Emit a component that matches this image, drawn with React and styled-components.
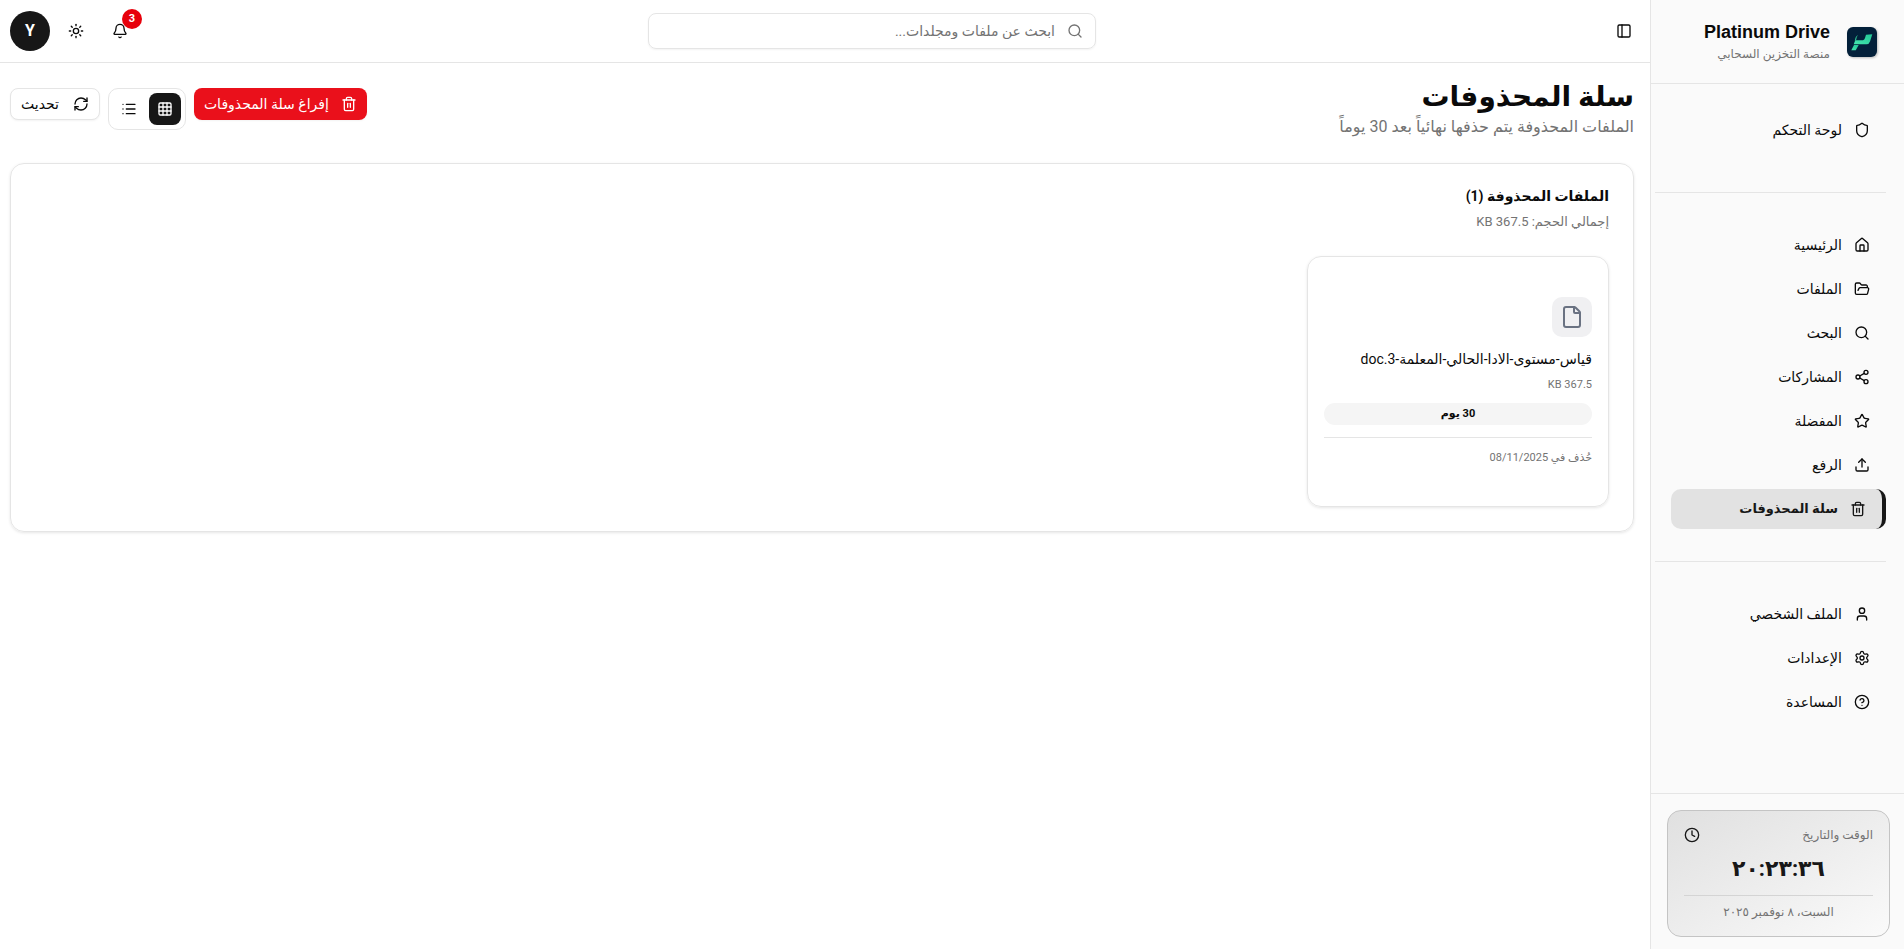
import React from "react";
import styled, { createGlobalStyle, css } from "styled-components";
import {
  Bell,
  CircleQuestionMark,
  Clock,
  File,
  FolderOpen,
  Grid3x3,
  House,
  List,
  PanelLeft,
  RefreshCw,
  Search,
  Settings,
  Share2,
  Shield,
  Star,
  Sun,
  Trash2,
  Upload,
  User,
} from "lucide-react";

const COLORS = {
  text: "#0a0a0a",
  primary: "#171717",
  muted: "#737373",
  border: "#e5e5e5",
  sidebar: "#fafafa",
  active: "#e2e2e2",
  badge: "#f5f5f5",
  red: "#e7000b",
  danger: "#ea101b",
  slate: "#6a7282",
};

const NAV_GROUPS = [
  [{ label: "لوحة التحكم", icon: Shield }],
  [
    { label: "الرئيسية", icon: House },
    { label: "الملفات", icon: FolderOpen },
    { label: "البحث", icon: Search },
    { label: "المشاركات", icon: Share2 },
    { label: "المفضلة", icon: Star },
    { label: "الرفع", icon: Upload },
    { label: "سلة المحذوفات", icon: Trash2, active: true },
  ],
  [
    { label: "الملف الشخصي", icon: User },
    { label: "الإعدادات", icon: Settings },
    { label: "المساعدة", icon: CircleQuestionMark },
  ],
];

const FILES = [
  {
    name: "قياس-مستوى-الادا-الحالي-المعلمة-3.doc",
    size: "367.5 KB",
    left: "30 يوم",
    deleted: "حُذف في 08/11/2025",
  },
];

const Logo = () => (
  <LogoSvg viewBox="0 0 32 32" aria-hidden="true">
    <defs>
      <linearGradient id="leaf" x1="0" y1="1" x2="1" y2="0">
        <stop offset="0" stopColor="#45e6ae" />
        <stop offset="1" stopColor="#22c796" />
      </linearGradient>
    </defs>
    <rect x="1" y="1" width="30" height="30" rx="6" fill="#03203a" />
    <path
      d="M20 8.700L26.300 8.300L24 15.500Q23 18.300 20.500 18.300H7.700L9.300 14.300H17Q18.500 14 19 12Z"
      fill="url(#leaf)"
    />
    <path d="M8 19H12.700L9.700 24.300H5.300Z" fill="url(#leaf)" />
    <path d="M8.800 15Q9 10.500 12 9Q10.300 11 10 14.500Z" fill="#2bb98d" />
  </LogoSvg>
);

const Sidebar = () => (
  <Aside>
    <Brand>
      <Logo />
      <div>
        <BrandName>Platinum Drive</BrandName>
        <BrandNote>منصة التخزين السحابي</BrandNote>
      </div>
    </Brand>
    <Nav>
      {NAV_GROUPS.map((items, i) => (
        <NavGroup key={i}>
          {items.map(({ label, icon: Icon, active }) => (
            <li key={label}>
              <NavLink href="#" $active={active}>
                <Icon size={16} />
                {label}
              </NavLink>
            </li>
          ))}
        </NavGroup>
      ))}
    </Nav>
    <AsideFooter>
      <ClockCard>
        <ClockHead>
          <span>الوقت والتاريخ</span>
          <Clock size={16} color={COLORS.primary} />
        </ClockHead>
        <Time>٢٠:٢٣:٣٦</Time>
        <Today>السبت، ٨ نوفمبر ٢٠٢٥</Today>
      </ClockCard>
    </AsideFooter>
  </Aside>
);

const TopBar = () => (
  <Header>
    <IconButton aria-label="القائمة الجانبية">
      <PanelLeft size={16} />
    </IconButton>
    <SearchBox>
      <Search size={16} />
      <SearchInput
        type="search"
        aria-label="بحث"
        placeholder="ابحث عن ملفات ومجلدات..."
      />
    </SearchBox>
    <HeaderActions>
      <IconButton aria-label="الإشعارات">
        <Bell size={16} />
        <Count>3</Count>
      </IconButton>
      <IconButton aria-label="المظهر">
        <Sun size={16} />
      </IconButton>
      <Avatar>Y</Avatar>
    </HeaderActions>
  </Header>
);

const FileCard = ({ file }) => (
  <Card>
    <FileIcon>
      <File size={24} />
    </FileIcon>
    <FileName>{file.name}</FileName>
    <FileSize>{file.size}</FileSize>
    <DaysLeft>{file.left}</DaysLeft>
    <Deleted>{file.deleted}</Deleted>
  </Card>
);

const App = () => (
  <Page dir="rtl" lang="ar">
    <GlobalStyle />
    <Sidebar />
    <Content>
      <TopBar />
      <Main>
        <TitleRow>
          <div>
            <Title>سلة المحذوفات</Title>
            <Subtitle>الملفات المحذوفة يتم حذفها نهائياً بعد 30 يوماً</Subtitle>
          </div>
          <Actions>
            <Button $danger>
              <Trash2 size={16} />
              إفراغ سلة المحذوفات
            </Button>
            <ViewSwitch>
              <ViewButton $on aria-label="شبكة">
                <Grid3x3 size={16} />
              </ViewButton>
              <ViewButton aria-label="قائمة">
                <List size={16} />
              </ViewButton>
            </ViewSwitch>
            <Button>
              <RefreshCw size={16} />
              تحديث
            </Button>
          </Actions>
        </TitleRow>
        <Panel>
          <PanelTitle>الملفات المحذوفة (1)</PanelTitle>
          <PanelNote>إجمالي الحجم: 367.5 KB</PanelNote>
          <FileGrid>
            {FILES.map((file) => (
              <FileCard key={file.name} file={file} />
            ))}
          </FileGrid>
        </Panel>
      </Main>
    </Content>
  </Page>
);

const GlobalStyle = createGlobalStyle`
  *, *::before, *::after {
    box-sizing: border-box;
  }
  body {
    margin: 0;
    background: #fff;
    color: ${COLORS.text};
    font-family: Roboto, "DejaVu Sans", sans-serif;
    font-size: 14px;
    line-height: 20px;
  }
  h1, h2, h3, p, ul {
    margin: 0;
    padding: 0;
  }
  ul {
    list-style: none;
  }
  button, input {
    font: inherit;
    color: inherit;
  }
  svg {
    flex-shrink: 0;
  }
`;

const Page = styled.div`
  display: flex;
  min-height: 100vh;
`;

const Aside = styled.aside`
  display: flex;
  flex-direction: column;
  flex: none;
  width: 254px;
  background: ${COLORS.sidebar};
  border-left: 1px solid ${COLORS.border};
`;

const Brand = styled.div`
  display: flex;
  align-items: center;
  gap: 16px;
  height: 84px;
  padding: 0 26px;
  border-bottom: 1px solid ${COLORS.border};
`;

const LogoSvg = styled.svg`
  width: 32px;
  height: 32px;
  filter: drop-shadow(1px 1px 1px rgba(0, 0, 0, 0.25));
`;

const BrandName = styled.p`
  font-family: "Liberation Sans", sans-serif;
  font-size: 18px;
  font-weight: 700;
  line-height: 24px;
`;

const BrandNote = styled.p`
  font-size: 12px;
  color: ${COLORS.muted};
`;

const Nav = styled.nav`
  flex: 1;
  padding: 0 18px 0 4px;
`;

const NavGroup = styled.ul`
  display: flex;
  flex-direction: column;
  gap: 4px;
  padding: 32px 0 32px 16px;

  & + & {
    border-top: 1px solid ${COLORS.border};
  }
  &:first-child {
    padding-top: 26px;
    padding-bottom: 42px;
  }
`;

const NavLink = styled.a`
  display: flex;
  align-items: center;
  gap: 12px;
  height: 40px;
  padding: 0 16px;
  border-radius: 10px;
  color: inherit;
  text-decoration: none;

  ${({ $active }) =>
    $active &&
    css`
      background: ${COLORS.active};
      border-right: 4px solid ${COLORS.primary};
      color: ${COLORS.primary};
      font-size: 13px;
      font-weight: 700;
    `}
`;

const AsideFooter = styled.div`
  padding: 16px 14px 12px 16px;
  border-top: 1px solid ${COLORS.border};
`;

const ClockCard = styled.div`
  padding: 16px;
  border: 1px solid #c4c4c4;
  border-radius: 14px;
  background: linear-gradient(to bottom right, #e0e0e0, #fafafa);
`;

const ClockHead = styled.div`
  display: flex;
  align-items: center;
  justify-content: space-between;
  height: 16px;
  font-size: 12px;
  color: ${COLORS.muted};
`;

const Time = styled.p`
  margin: 8px 0;
  font-size: 22px;
  font-weight: 700;
  line-height: 36px;
  text-align: center;
  color: ${COLORS.primary};
`;

const Today = styled.p`
  padding-top: 8px;
  border-top: 1px solid #d4d4d4;
  font-size: 12px;
  line-height: 16px;
  text-align: center;
  color: ${COLORS.muted};
`;

const Content = styled.div`
  flex: 1;
  min-width: 0;
`;

const Header = styled.header`
  display: flex;
  align-items: center;
  justify-content: space-between;
  height: 63px;
  padding: 0 8px 0 10px;
  border-bottom: 1px solid ${COLORS.border};
`;

const IconButton = styled.button`
  position: relative; // anchors the count badge
  display: grid;
  place-items: center;
  width: 36px;
  height: 36px;
  padding: 0;
  border: none;
  background: none;
`;

const Count = styled.span`
  position: absolute;
  top: -4px;
  right: -4px;
  display: grid;
  place-items: center;
  width: 20px;
  height: 20px;
  border-radius: 50%;
  background: ${COLORS.red};
  color: #fff;
  font-size: 11px;
  font-weight: 700;
`;

const SearchBox = styled.div`
  display: flex;
  align-items: center;
  gap: 12px;
  width: 448px;
  height: 36px;
  padding: 0 12px;
  border: 1px solid ${COLORS.border};
  border-radius: 8px;
  box-shadow: 0 1px 2px rgba(0, 0, 0, 0.05);
  color: ${COLORS.muted};
`;

const SearchInput = styled.input`
  flex: 1;
  min-width: 0;
  padding: 0;
  border: none;
  outline: none;
  background: none;

  &::placeholder {
    color: ${COLORS.muted};
    opacity: 1;
  }
`;

const HeaderActions = styled.div`
  display: flex;
  align-items: center;
  gap: 8px;
`;

const Avatar = styled.button`
  width: 40px;
  height: 40px;
  padding: 0;
  border: none;
  border-radius: 50%;
  background: ${COLORS.primary};
  color: #fff;
  font-size: 16px;
  font-weight: 700;
`;

const Main = styled.main`
  padding: 16px 16px 16px 10px;
`;

const TitleRow = styled.div`
  display: flex;
  justify-content: space-between;
  align-items: flex-start;
  margin-bottom: 24px;
`;

const Title = styled.h1`
  font-size: 28px;
  font-weight: 700;
  line-height: 36px;
`;

const Subtitle = styled.p`
  font-size: 16px;
  line-height: 24px;
  color: ${COLORS.muted};
`;

const Actions = styled.div`
  display: flex;
  align-items: flex-start;
  gap: 8px;
  padding-top: 9px;
`;

const Button = styled.button`
  display: flex;
  align-items: center;
  gap: ${({ $danger }) => ($danger ? "12px" : "14px")};
  height: 32px;
  padding: 0 10px;
  border: ${({ $danger }) => ($danger ? "none" : `1px solid ${COLORS.border}`)};
  border-radius: 8px;
  background: ${({ $danger }) => ($danger ? COLORS.danger : "#fff")};
  color: ${({ $danger }) => ($danger ? "#fff" : COLORS.text)};
  box-shadow: 0 1px 2px rgba(0, 0, 0, 0.05);
`;

const ViewSwitch = styled.div`
  display: flex;
  gap: 4px;
  padding: 4px;
  border: 1px solid ${COLORS.border};
  border-radius: 10px;
`;

const ViewButton = styled.button`
  display: grid;
  place-items: center;
  width: 32px;
  height: 32px;
  padding: 0;
  border: none;
  border-radius: 8px;
  background: ${({ $on }) => ($on ? COLORS.primary : "none")};
  color: ${({ $on }) => ($on ? "#fff" : COLORS.text)};
`;

const Panel = styled.section`
  padding: 24px;
  border: 1px solid ${COLORS.border};
  border-radius: 14px;
  box-shadow: 0 1px 3px rgba(0, 0, 0, 0.1);
`;

const PanelTitle = styled.h2`
  font-size: 14px;
  font-weight: 700;
  line-height: 16px;
`;

const PanelNote = styled.p`
  margin: 8px 0 24px;
  font-size: 13px;
  color: ${COLORS.muted};
`;

const FileGrid = styled.div`
  display: grid;
  grid-template-columns: repeat(5, 1fr);
  gap: 16px;
`;

const Card = styled.article`
  padding: 40px 16px;
  border: 1px solid ${COLORS.border};
  border-radius: 14px;
  box-shadow: 0 1px 3px rgba(0, 0, 0, 0.1);
`;

const FileIcon = styled.div`
  display: grid;
  place-items: center;
  width: 40px;
  height: 40px;
  border-radius: 10px;
  background: #f0f0f2;
  color: ${COLORS.slate};
`;

const FileName = styled.h3`
  margin: 12px 0 8px;
  font-size: 14px;
  font-weight: 400;
  line-height: 20px;
  white-space: nowrap;
`;

const FileSize = styled.p`
  font-size: 11px;
  line-height: 16px;
  color: ${COLORS.muted};
`;

const DaysLeft = styled.p`
  margin: 10px 0 12px;
  border-radius: 11px;
  background: ${COLORS.badge};
  font-size: 11px;
  font-weight: 700;
  line-height: 22px;
  text-align: center;
`;

const Deleted = styled.p`
  padding-top: 12px;
  border-top: 1px solid ${COLORS.border};
  font-size: 11px;
  line-height: 16px;
  color: ${COLORS.muted};
`;

export default App;
